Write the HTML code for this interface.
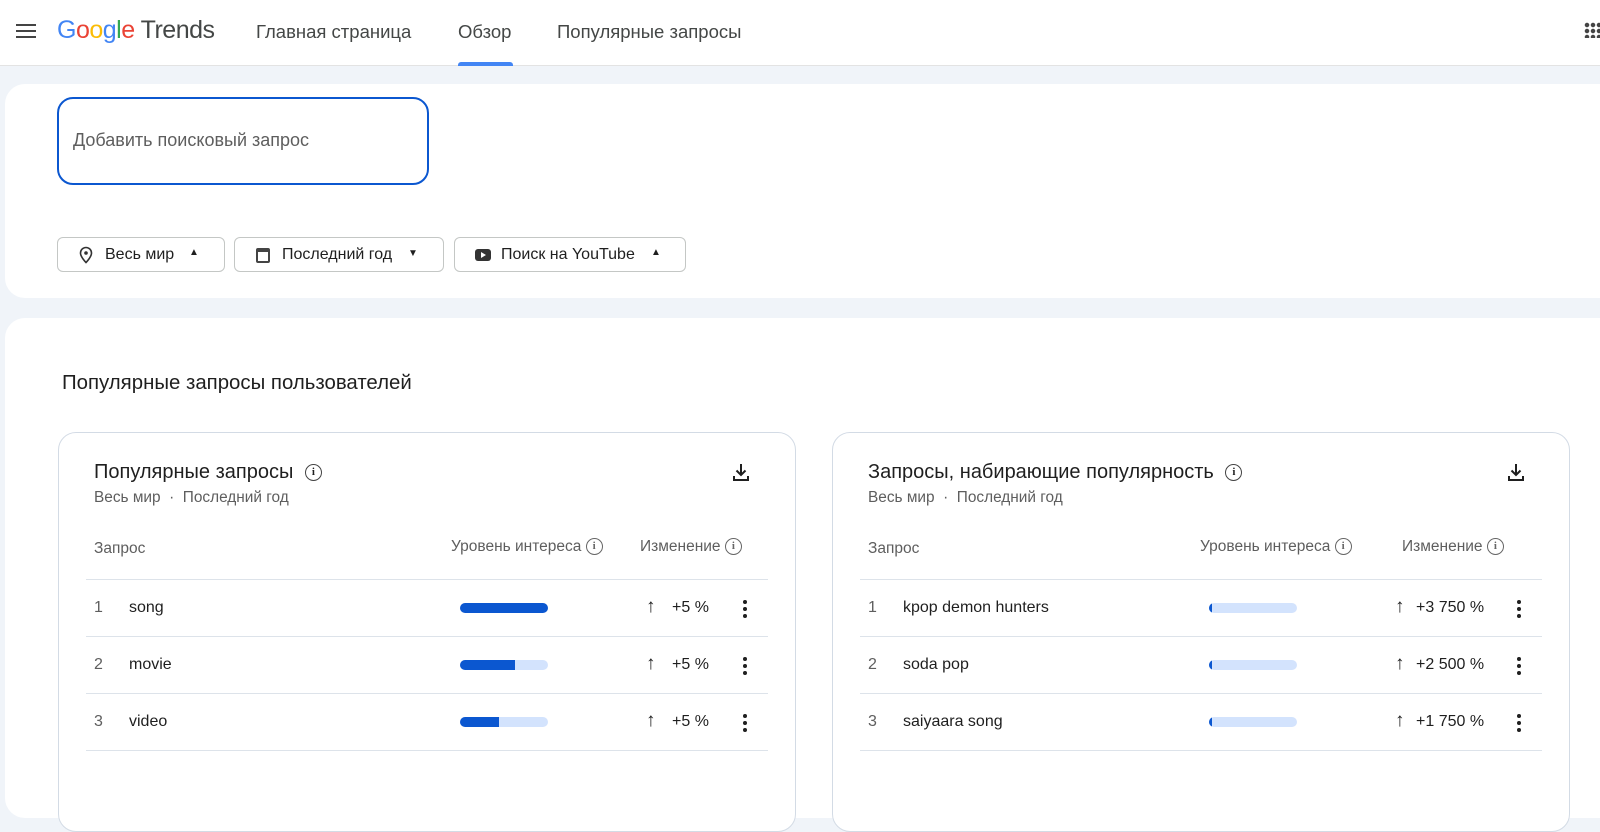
<!DOCTYPE html><html><head><meta charset="utf-8"><style>
*{margin:0;padding:0;box-sizing:border-box}
body{width:1600px;height:768px;overflow:hidden;background:#f0f4f9;font-family:"Liberation Sans",sans-serif;color:#1f1f1f;position:relative}
.a{position:absolute;white-space:nowrap}
.hdr{position:absolute;left:0;top:0;width:1600px;height:66px;background:#fff;border-bottom:1px solid #e3e3e3}
.nav{font-size:18.5px;color:#444746;top:21px}
.card{position:absolute;background:#fff;border-radius:20px}
.chip{position:absolute;top:237px;height:35px;border:1px solid #c4c7c5;border-radius:6px;font-size:16px;color:#1f1f1f}
.panel{position:absolute;top:432px;width:738px;height:400px;border:1px solid #d3dbe5;border-radius:18px;background:#fff}
.line{position:absolute;height:1px;background:#dde3ea}
.bar{position:absolute;height:10px;border-radius:5px;background:#d3e3fd;overflow:hidden}
.bar i{display:block;height:100%;background:#0b57d0}
.g{color:#5e5e5e}
.info{display:inline-block;width:17px;height:17px;border:1.5px solid #444;border-radius:50%;font-size:11px;text-align:center;line-height:14px;font-weight:bold;vertical-align:middle;font-family:"Liberation Serif",serif}
.dots{position:absolute;width:4px}
.dots b{display:block;width:4px;height:4px;border-radius:2px;background:#1f1f1f;margin-bottom:3px}
.r{font-size:16px}
.h{font-size:15.5px}
</style></head><body>
<div class="hdr"></div>
<div class="a" style="left:16px;top:24px;width:20px;height:2px;background:#444;box-shadow:0 6px 0 #444,0 12px 0 #444"></div>
<div class="a" style="left:57px;top:16px;font-size:25px;letter-spacing:-0.5px"><span style="color:#4285f4">G</span><span style="color:#ea4335">o</span><span style="color:#fbbc05">o</span><span style="color:#4285f4">g</span><span style="color:#34a853">l</span><span style="color:#ea4335">e</span> <span style="color:#444746">Trends</span></div>
<div class="a nav" style="left:256px">Главная страница</div>
<div class="a nav" style="left:458px">Обзор</div>
<div class="a" style="left:458px;top:62px;width:55px;height:4px;background:#4285f4;border-radius:3px 3px 0 0"></div>
<div class="a nav" style="left:557px">Популярные запросы</div>
<div class="a" style="left:1584px;top:22px;width:16px;height:16px;background:radial-gradient(circle,#444 2px,transparent 2.5px) 0 0/6px 6px"></div>

<div class="card" style="left:5px;top:84px;width:1620px;height:214px"></div>
<div class="a" style="left:57px;top:97px;width:372px;height:88px;border:2px solid #0b57d0;border-radius:16px"></div>
<div class="a" style="left:73px;top:130px;font-size:18px;color:#5e5e5e">Добавить поисковый запрос</div>
<div class="chip" style="left:57px;width:168px"><svg class="a" style="left:20px;top:8px" width="16" height="18" viewBox="0 0 16 18"><path d="M8 1.5a5.5 5.5 0 0 0-5.5 5.5c0 4 5.5 9.5 5.5 9.5s5.5-5.5 5.5-9.5A5.5 5.5 0 0 0 8 1.5z" fill="none" stroke="#333" stroke-width="1.6"/><circle cx="8" cy="7" r="1.8" fill="#333"/></svg><span class="a" style="left:47px;top:8px">Весь мир</span><span class="a" style="left:131px;top:9px;font-size:10px">▲</span></div>
<div class="chip" style="left:234px;width:210px"><span class="a" style="left:21px;top:10px;width:14px;height:15px;border:2px solid #444;border-top-width:4px;border-radius:2px"></span><span class="a" style="left:47px;top:8px">Последний год</span><span class="a" style="left:173px;top:10px;font-size:10px">▼</span></div>
<div class="chip" style="left:454px;width:232px"><span class="a" style="left:20px;top:11px;width:16px;height:12px;background:#333;border-radius:3px"></span><span class="a" style="left:26px;top:14px;border-left:5px solid #fff;border-top:3px solid transparent;border-bottom:3px solid transparent"></span><span class="a" style="left:46px;top:8px">Поиск на YouTube</span><span class="a" style="left:196px;top:9px;font-size:10px">▲</span></div>

<div class="card" style="left:5px;top:318px;width:1620px;height:500px"></div>
<div class="a" style="left:62px;top:372px;font-size:20.4px">Популярные запросы пользователей</div>

<div class="panel" style="left:58px"></div>
<div class="panel" style="left:832px"></div>

<!-- left -->
<div class="a" style="left:94px;top:461px;font-size:20px">Популярные запросы <span class="info" style="margin-left:6px">i</span></div>
<div class="a g" style="left:94px;top:489px;font-size:15.4px">Весь мир &nbsp;·&nbsp; Последний год</div>
<svg class="a" style="left:731px;top:462px" width="20" height="20" viewBox="0 0 20 20"><path d="M10 2v11M5.5 8.5 10 13l4.5-4.5M3 14v4h14v-4" fill="none" stroke="#1f1f1f" stroke-width="2"/></svg>
<div class="a g h" style="left:94px;top:540px">Запрос</div>
<div class="a g h" style="left:451px;top:538px">Уровень интереса <span class="info" style="border-color:#666;color:#666">i</span></div>
<div class="a g h" style="left:640px;top:538px">Изменение <span class="info" style="border-color:#666;color:#666">i</span></div>
<div class="line" style="left:86px;top:579px;width:682px"></div>
<div class="line" style="left:86px;top:636px;width:682px"></div>
<div class="line" style="left:86px;top:693px;width:682px"></div>
<div class="line" style="left:86px;top:750px;width:682px"></div>

<div class="a g r" style="left:94px;top:599px">1</div><div class="a r" style="left:129px;top:599px">song</div><div class="bar" style="left:460px;top:603px;width:88px"><i style="width:100%"></i></div><div class="a" style="left:646px;top:596px;font-size:19px">↑</div><div class="a r" style="left:672px;top:599px">+5 %</div><div class="dots" style="left:743px;top:600px"><b></b><b></b><b></b></div>
<div class="a g r" style="left:94px;top:656px">2</div><div class="a r" style="left:129px;top:656px">movie</div><div class="bar" style="left:460px;top:660px;width:88px"><i style="width:62%"></i></div><div class="a" style="left:646px;top:653px;font-size:19px">↑</div><div class="a r" style="left:672px;top:656px">+5 %</div><div class="dots" style="left:743px;top:657px"><b></b><b></b><b></b></div>
<div class="a g r" style="left:94px;top:713px">3</div><div class="a r" style="left:129px;top:713px">video</div><div class="bar" style="left:460px;top:717px;width:88px"><i style="width:44%"></i></div><div class="a" style="left:646px;top:710px;font-size:19px">↑</div><div class="a r" style="left:672px;top:713px">+5 %</div><div class="dots" style="left:743px;top:714px"><b></b><b></b><b></b></div>

<!-- right -->
<div class="a" style="left:868px;top:461px;font-size:20px">Запросы, набирающие популярность <span class="info" style="margin-left:6px">i</span></div>
<div class="a g" style="left:868px;top:489px;font-size:15.4px">Весь мир &nbsp;·&nbsp; Последний год</div>
<svg class="a" style="left:1506px;top:462px" width="20" height="20" viewBox="0 0 20 20"><path d="M10 2v11M5.5 8.5 10 13l4.5-4.5M3 14v4h14v-4" fill="none" stroke="#1f1f1f" stroke-width="2"/></svg>
<div class="a g h" style="left:868px;top:540px">Запрос</div>
<div class="a g h" style="left:1200px;top:538px">Уровень интереса <span class="info" style="border-color:#666;color:#666">i</span></div>
<div class="a g h" style="left:1402px;top:538px">Изменение <span class="info" style="border-color:#666;color:#666">i</span></div>
<div class="line" style="left:860px;top:579px;width:682px"></div>
<div class="line" style="left:860px;top:636px;width:682px"></div>
<div class="line" style="left:860px;top:693px;width:682px"></div>
<div class="line" style="left:860px;top:750px;width:682px"></div>

<div class="a g r" style="left:868px;top:599px">1</div><div class="a r" style="left:903px;top:599px">kpop demon hunters</div><div class="bar" style="left:1209px;top:603px;width:88px"><i style="width:3%"></i></div><div class="a" style="left:1395px;top:596px;font-size:19px">↑</div><div class="a r" style="left:1416px;top:599px">+3 750 %</div><div class="dots" style="left:1517px;top:600px"><b></b><b></b><b></b></div>
<div class="a g r" style="left:868px;top:656px">2</div><div class="a r" style="left:903px;top:656px">soda pop</div><div class="bar" style="left:1209px;top:660px;width:88px"><i style="width:3%"></i></div><div class="a" style="left:1395px;top:653px;font-size:19px">↑</div><div class="a r" style="left:1416px;top:656px">+2 500 %</div><div class="dots" style="left:1517px;top:657px"><b></b><b></b><b></b></div>
<div class="a g r" style="left:868px;top:713px">3</div><div class="a r" style="left:903px;top:713px">saiyaara song</div><div class="bar" style="left:1209px;top:717px;width:88px"><i style="width:3%"></i></div><div class="a" style="left:1395px;top:710px;font-size:19px">↑</div><div class="a r" style="left:1416px;top:713px">+1 750 %</div><div class="dots" style="left:1517px;top:714px"><b></b><b></b><b></b></div>
</body></html>
